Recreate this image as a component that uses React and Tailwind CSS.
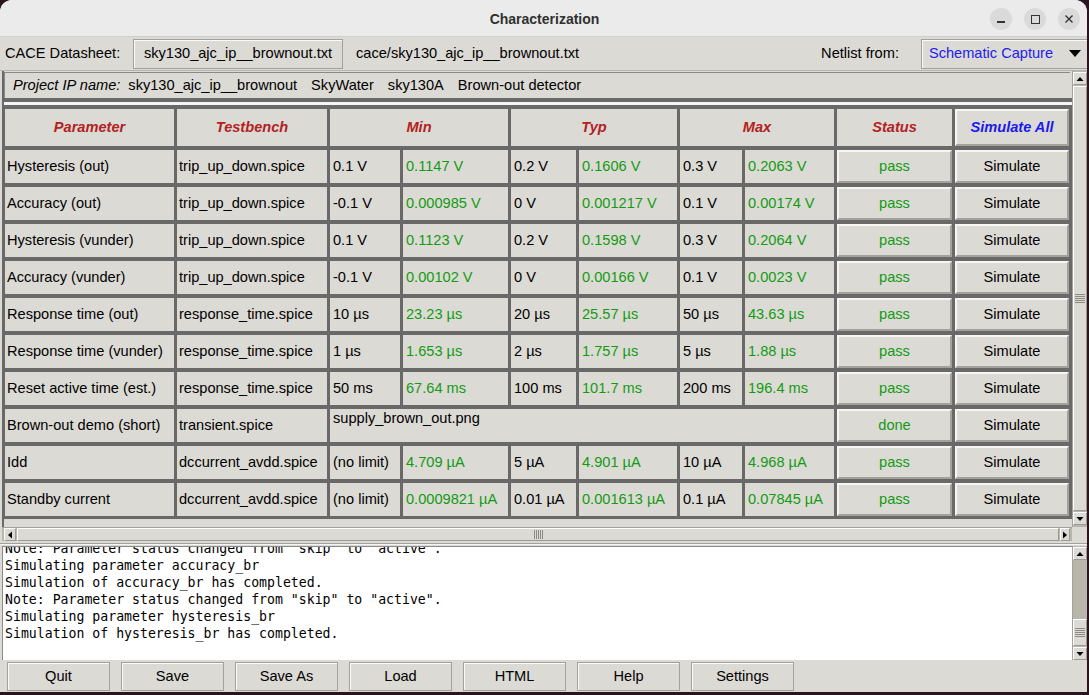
import React from "react";

const rows = [
  ["Hysteresis (out)", "trip_up_down.spice", "0.1 V", "0.1147 V", "0.2 V", "0.1606 V", "0.3 V", "0.2063 V", "pass"],
  ["Accuracy (out)", "trip_up_down.spice", "-0.1 V", "0.000985 V", "0 V", "0.001217 V", "0.1 V", "0.00174 V", "pass"],
  ["Hysteresis (vunder)", "trip_up_down.spice", "0.1 V", "0.1123 V", "0.2 V", "0.1598 V", "0.3 V", "0.2064 V", "pass"],
  ["Accuracy (vunder)", "trip_up_down.spice", "-0.1 V", "0.00102 V", "0 V", "0.00166 V", "0.1 V", "0.0023 V", "pass"],
  ["Response time (out)", "response_time.spice", "10 µs", "23.23 µs", "20 µs", "25.57 µs", "50 µs", "43.63 µs", "pass"],
  ["Response time (vunder)", "response_time.spice", "1 µs", "1.653 µs", "2 µs", "1.757 µs", "5 µs", "1.88 µs", "pass"],
  ["Reset active time (est.)", "response_time.spice", "50 ms", "67.64 ms", "100 ms", "101.7 ms", "200 ms", "196.4 ms", "pass"],
  ["Brown-out demo (short)", "transient.spice", "supply_brown_out.png", null, null, null, null, null, "done"],
  ["Idd", "dccurrent_avdd.spice", "(no limit)", "4.709 µA", "5 µA", "4.901 µA", "10 µA", "4.968 µA", "pass"],
  ["Standby current", "dccurrent_avdd.spice", "(no limit)", "0.0009821 µA", "0.01 µA", "0.001613 µA", "0.1 µA", "0.07845 µA", "pass"],
];

const logLines = [
  'Note: Parameter status changed from "skip" to "active".',
  "Simulating parameter accuracy_br",
  "Simulation of accuracy_br has completed.",
  'Note: Parameter status changed from "skip" to "active".',
  "Simulating parameter hysteresis_br",
  "Simulation of hysteresis_br has completed.",
];

function Tri({ dir }) {
  const pts = {
    up: "0.5,5 7.5,5 4,1",
    down: "0.5,1 7.5,1 4,5",
    left: "5,0.5 5,7.5 1,4",
    right: "1,0.5 1,7.5 5,4",
  }[dir];
  const vert = dir === "up" || dir === "down";
  return (
    <svg width={vert ? 8 : 6} height={vert ? 6 : 8} viewBox={vert ? "0 0 8 6" : "0 0 6 8"}>
      <polygon points={pts} fill="#000" />
    </svg>
  );
}

function ArrowBox({ dir, cls }) {
  return (
    <div className={`flex items-center justify-center bg-[#dcdad5] border border-t-white border-l-white border-b-[#9d9a94] border-r-[#9d9a94] ${cls}`}>
      <Tri dir={dir} />
    </div>
  );
}

function HGrip() {
  return (
    <div className="flex flex-col gap-[1px]">
      <div className="w-[10px] h-[1px] bg-[#8e8a83]" />
      <div className="w-[10px] h-[1px] bg-[#8e8a83]" />
      <div className="w-[10px] h-[1px] bg-[#8e8a83]" />
      <div className="w-[10px] h-[1px] bg-[#8e8a83]" />
      <div className="w-[10px] h-[1px] bg-[#8e8a83]" />
    </div>
  );
}

function VGrip() {
  return (
    <div className="flex flex-row gap-[1px]">
      <div className="h-[9px] w-[1px] bg-[#8e8a83]" />
      <div className="h-[9px] w-[1px] bg-[#8e8a83]" />
      <div className="h-[9px] w-[1px] bg-[#8e8a83]" />
      <div className="h-[9px] w-[1px] bg-[#8e8a83]" />
      <div className="h-[9px] w-[1px] bg-[#8e8a83]" />
    </div>
  );
}

const cellBase = "bg-[#dcdad5] flex items-center px-[2px] whitespace-nowrap overflow-hidden";
const raised = "border-2 border-t-[#f7f6f4] border-l-[#f7f6f4] border-b-[#a4a09a] border-r-[#a4a09a]";
const hdrBase = "bg-[#dcdad5] flex items-center justify-center font-bold italic";
const hdr = `${hdrBase} text-[#b22222]`;
const green = "text-[#139a13]";

export default function App() {
  return (
    <div className="w-[1089px] h-[695px] bg-[#2a1420] overflow-hidden font-['Liberation_Sans',Arial,sans-serif] text-[14.6px] text-black">
      <div className="w-[1087px] h-[692px] flex flex-col bg-[#dcdad5] rounded-t-[12px] overflow-hidden">
        {/* Title bar */}
        <div className="h-[37px] shrink-0 bg-[#ebebeb] border-b border-[#cfcfcf] flex items-center relative">
          <div className="flex-1 text-center font-bold text-[14px] text-[#303030] pl-[2px] pt-[3px]">Characterization</div>
          <div className="absolute right-[7px] top-[8px] flex gap-[12px]">
            <div className="w-[22px] h-[22px] rounded-full bg-[#dadada] flex items-center justify-center">
              <div className="w-[8px] h-[1.5px] bg-[#333] mt-[6px]" />
            </div>
            <div className="w-[22px] h-[22px] rounded-full bg-[#dadada] flex items-center justify-center">
              <div className="w-[9px] h-[9px] border-[1.5px] border-[#333]" />
            </div>
            <div className="w-[22px] h-[22px] rounded-full bg-[#dadada] flex items-center justify-center">
              <svg width="10" height="10" viewBox="0 0 10 10">
                <path d="M1.5 1.5 L8.5 8.5 M8.5 1.5 L1.5 8.5" stroke="#333" strokeWidth="1.4" />
              </svg>
            </div>
          </div>
        </div>

        {/* Datasheet row */}
        <div className="h-[33px] shrink-0 flex items-center">
          <div className="pl-[5px] w-[133px]">CACE Datasheet:</div>
          <div className="h-[30px] w-[210px] flex items-center justify-center border border-[#a4a09a] shadow-[inset_1px_1px_0_#fafafa]">
            sky130_ajc_ip__brownout.txt
          </div>
          <div className="pl-[13px]">cace/sky130_ajc_ip__brownout.txt</div>
          <div className="ml-[242px]">Netlist from:</div>
          <div className="ml-[22px] h-[30px] flex-1 flex items-center border border-[#a4a09a] border-r-0 shadow-[inset_1px_1px_0_#fafafa] pl-[7px]">
            <span className="text-[#2020f0]">Schematic Capture</span>
            <span className="ml-auto mr-[6px]"><svg width="12" height="8" viewBox="0 0 12 8"><polygon points="0,0 12,0 6,7" fill="#000" /></svg></span>
          </div>
        </div>

        {/* Main frame */}
        <div className="h-[457px] shrink-0 flex pl-[2px] border-t border-[#b9b5ad]">
          <div className="w-[1070px] h-full flex flex-col bg-[#dcdad5] border-l-2 border-[#696969] overflow-hidden">
            <div className="mt-[1px] h-[26px] w-[1066px] shrink-0 flex items-center gap-[14px] pl-[8px] border-t border-l border-[#8a8a8a]">
              <span className="italic mr-[-6px]">Project IP name:</span>
              <span>sky130_ajc_ip__brownout</span>
              <span>SkyWater</span>
              <span>sky130A</span>
              <span>Brown-out detector</span>
            </div>
            <div className="h-[4px] shrink-0 bg-[#696969]" />
            <div className="h-[3px] shrink-0 bg-[#f4f4f4]" />
            <div className="shrink-0 bg-[#696969] pt-[4px] pb-[3px] pl-[1px] pr-[3px]">
              <div className="grid grid-cols-[169px_150px_70px_105px_65px_98px_62px_89px_115px_114px] grid-rows-[37px_repeat(10,33px)] gap-x-[3px] gap-y-[4px]">
                <div className={hdr}>Parameter</div>
                <div className={hdr}>Testbench</div>
                <div className={`${hdr} col-span-2`}>Min</div>
                <div className={`${hdr} col-span-2`}>Typ</div>
                <div className={`${hdr} col-span-2`}>Max</div>
                <div className={hdr}>Status</div>
                <div className={`${hdrBase} ${raised} text-[#1a1aee]`}>Simulate All</div>
                {rows.map((r, i) =>
                  r[3] === null ? (
                    <React.Fragment key={i}>
                      <div className={cellBase}>{r[0]}</div>
                      <div className={cellBase}>{r[1]}</div>
                      <div className="bg-[#dcdad5] col-span-6 pl-[3px] leading-[17px] pt-[1px] whitespace-nowrap">{r[2]}</div>
                      <div className={`${cellBase} ${raised} justify-center ${green}`}>{r[8]}</div>
                      <div className={`${cellBase} ${raised} justify-center`}>Simulate</div>
                    </React.Fragment>
                  ) : (
                    <React.Fragment key={i}>
                      <div className={cellBase}>{r[0]}</div>
                      <div className={cellBase}>{r[1]}</div>
                      <div className={`${cellBase} pl-[3px]`}>{r[2]}</div>
                      <div className={`${cellBase} pl-[3px] ${green}`}>{r[3]}</div>
                      <div className={`${cellBase} pl-[3px]`}>{r[4]}</div>
                      <div className={`${cellBase} pl-[3px] ${green}`}>{r[5]}</div>
                      <div className={`${cellBase} pl-[3px]`}>{r[6]}</div>
                      <div className={`${cellBase} pl-[3px] ${green}`}>{r[7]}</div>
                      <div className={`${cellBase} ${raised} justify-center ${green}`}>{r[8]}</div>
                      <div className={`${cellBase} ${raised} justify-center`}>Simulate</div>
                    </React.Fragment>
                  )
                )}
              </div>
            </div>
          </div>
          {/* vertical scrollbar */}
          <div className="w-[15px] h-full flex flex-col bg-[#bab5ab] border-l border-[#a4a09a] pt-[1px]">
            <ArrowBox dir="up" cls="h-[13px] shrink-0" />
            <div className="flex-1 py-[1px] flex">
              <div className="flex-1 bg-[#dcdad5] border border-t-white border-l-white border-b-[#9d9a94] border-r-[#9d9a94] flex items-center justify-center">
                <HGrip />
              </div>
            </div>
            <ArrowBox dir="down" cls="h-[13px] shrink-0 mb-[2px]" />
          </div>
        </div>

        {/* horizontal scrollbar */}
        <div className="h-[14px] shrink-0 flex pl-[2px]">
          <div className="w-[1070px] h-full flex bg-[#bab5ab] border-t border-[#a4a09a] pl-[2px]">
            <ArrowBox dir="left" cls="w-[12px] shrink-0" />
            <div className="flex-1 px-[1px] flex">
              <div className="flex-1 bg-[#dcdad5] border border-t-white border-l-white border-b-[#9d9a94] border-r-[#9d9a94] flex items-center justify-center">
                <VGrip />
              </div>
            </div>
            <ArrowBox dir="right" cls="w-[10px] shrink-0 mr-[2px]" />
          </div>
        </div>

        {/* separator */}
        <div className="h-[5px] shrink-0 flex flex-col justify-center">
          <div className="h-[1px] bg-[#a4a09a]" />
          <div className="h-[1px] bg-[#f5f5f5]" />
        </div>

        {/* log */}
        <div className="h-[114px] shrink-0 flex pl-[2px]">
          <div className="w-[1070px] h-full bg-white border-t border-l border-[#8a8a8a] overflow-hidden">
            <div className="mt-[-6px] pl-[2px] font-['DejaVu_Sans_Mono',monospace] text-[13.2px] leading-[16.9px] whitespace-pre">
              {logLines.map((l, i) => (
                <div key={i}>{l}</div>
              ))}
            </div>
          </div>
          <div className="w-[15px] h-full flex flex-col bg-[#bab5ab] border-l border-[#a4a09a] pt-[1px]">
            <ArrowBox dir="up" cls="h-[13px] shrink-0" />
            <div className="flex-1 flex flex-col justify-end py-[1px]">
              <div className="h-[27px] bg-[#dcdad5] border border-t-white border-l-white border-b-[#9d9a94] border-r-[#9d9a94] flex items-center justify-center">
                <HGrip />
              </div>
            </div>
            <ArrowBox dir="down" cls="h-[13px] shrink-0" />
          </div>
        </div>

        {/* buttons */}
        <div className="flex-1 flex items-start pt-[2px] pl-[7px] gap-[11px]">
          {["Quit", "Save", "Save As", "Load", "HTML", "Help", "Settings"].map((b) => (
            <div key={b} className="w-[103px] h-[29px] flex items-center justify-center border border-[#a4a09a] shadow-[inset_1px_1px_0_#fafafa]">
              {b}
            </div>
          ))}
        </div>
      </div>
    </div>
  );
}
